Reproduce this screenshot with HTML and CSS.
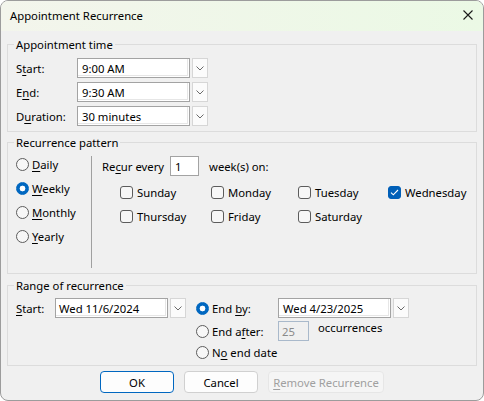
FILE: index.html
```html
<!DOCTYPE html>
<html lang="en">
<head>
<meta charset="utf-8">
<title>Appointment Recurrence</title>
<link rel="stylesheet" href="styles.css">
</head>
<body>
<div class="window">
  <div class="titlebar">
    <span class="title">Appointment Recurrence</span>
    <svg class="close" width="10" height="10" viewBox="0 0 10 10"><path d="M0.5 0.5L9.5 9.5M9.5 0.5L0.5 9.5" stroke="#1a1a1a" stroke-width="1.1" fill="none"/></svg>
  </div>
  <div class="content">
    <fieldset class="group g-time">
      <legend>Appointment time</legend>
      <div class="row"><span class="lbl">S<u>t</u>art:</span>
        <div class="combo"><div class="field">9:00 AM</div><div class="drop"><svg width="8" height="5" viewBox="0 0 8 5"><path d="M0.5 0.5L4 4L7.5 0.5" stroke="#6a6a6a" fill="none"/></svg></div></div></div>
      <div class="row"><span class="lbl">E<u>n</u>d:</span>
        <div class="combo"><div class="field">9:30 AM</div><div class="drop"><svg width="8" height="5" viewBox="0 0 8 5"><path d="M0.5 0.5L4 4L7.5 0.5" stroke="#6a6a6a" fill="none"/></svg></div></div></div>
      <div class="row"><span class="lbl">D<u>u</u>ration:</span>
        <div class="combo"><div class="field">30 minutes</div><div class="drop"><svg width="8" height="5" viewBox="0 0 8 5"><path d="M0.5 0.5L4 4L7.5 0.5" stroke="#6a6a6a" fill="none"/></svg></div></div></div>
    </fieldset>

    <fieldset class="group g-pattern">
      <legend>Recurrence pattern</legend>
      <div class="pattern">
        <div class="freq">
          <div class="opt"><span class="rb"></span><span><u>D</u>aily</span></div>
          <div class="opt"><span class="rb on"></span><span><u>W</u>eekly</span></div>
          <div class="opt"><span class="rb"></span><span><u>M</u>onthly</span></div>
          <div class="opt"><span class="rb"></span><span><u>Y</u>early</span></div>
        </div>
        <div class="sep"></div>
        <div class="weekly">
          <div class="recur"><span class="recur-lbl">Re<u>c</u>ur every</span><span class="num">1</span><span>week(s) on:</span></div>
          <div class="days">
            <div class="opt"><span class="cb"></span><span>Sunday</span></div>
            <div class="opt"><span class="cb"></span><span>Monday</span></div>
            <div class="opt"><span class="cb"></span><span>Tuesday</span></div>
            <div class="opt"><span class="cb on"><svg width="9" height="7" viewBox="0 0 9 7"><path d="M1 3.6L3.3 5.8L8 1" stroke="#fff" stroke-width="1.1" fill="none"/></svg></span><span>Wednesday</span></div>
            <div class="opt"><span class="cb"></span><span>Thursday</span></div>
            <div class="opt"><span class="cb"></span><span>Friday</span></div>
            <div class="opt"><span class="cb"></span><span>Saturday</span></div>
          </div>
        </div>
      </div>
    </fieldset>

    <fieldset class="group g-range">
      <legend>Range of recurrence</legend>
      <div class="range">
        <div class="range-start">
          <span class="lbl-s"><u>S</u>tart:</span>
          <div class="combo"><div class="field f-date">Wed 11/6/2024</div><div class="drop"><svg width="8" height="5" viewBox="0 0 8 5"><path d="M0.5 0.5L4 4L7.5 0.5" stroke="#6a6a6a" fill="none"/></svg></div></div>
        </div>
        <div class="range-end">
          <div class="opt rrow"><span class="rb on"></span><span class="rlbl">End <u>b</u>y:</span>
            <div class="combo"><div class="field">Wed 4/23/2025</div><div class="drop"><svg width="8" height="5" viewBox="0 0 8 5"><path d="M0.5 0.5L4 4L7.5 0.5" stroke="#6a6a6a" fill="none"/></svg></div></div></div>
          <div class="opt rrow r2"><span class="rb"></span><span class="rlbl">End a<u>f</u>ter:</span><span class="num dis">25</span><span class="occ">occurrences</span></div>
          <div class="opt rrow r3"><span class="rb"></span><span>N<u>o</u> end date</span></div>
        </div>
      </div>
    </fieldset>

    <div class="buttons">
      <button class="btn default">OK</button>
      <button class="btn">Cancel</button>
      <button class="btn wide" disabled><u>R</u>emove Recurrence</button>
    </div>
  </div>
</div>
</body>
</html>
```
FILE: styles.css
```css
html, body {
  margin: 0;
  background: #ffffff;
}
body {
  font-family: "Noto Sans", "Liberation Sans", sans-serif;
  font-size: 11.3px;
  color: #000;
}
u { text-decoration-thickness: 1px; text-underline-offset: 2px; }

.window {
  width: 484px;
  height: 401px;
  box-sizing: border-box;
  border: 1px solid #9c9c9c;
  border-radius: 8px;
  background: #f0f0f0;
  overflow: hidden;
  display: flex;
  flex-direction: column;
}

.titlebar {
  height: 30px;
  flex: none;
  display: flex;
  align-items: center;
  justify-content: space-between;
  padding-left: 9px;
  background: linear-gradient(90deg, #f3f5ec, #ebf9e5);
}
.title { line-height: 30px; }
.close { margin-right: 10px; margin-top: -2px; }

.content {
  padding: 6px 6px 0;
  display: flex;
  flex-direction: column;
}

.group {
  margin: 0;
  min-width: 0;
  border: 1px solid #dcdcdc;
  padding: 0 8px;
}
.group legend {
  padding: 0 2px;
  margin-left: -2px;
  line-height: 15px;
}

.g-time { padding-top: 6px; padding-bottom: 5px; }
.g-pattern { margin-top: 3px; padding-top: 4px; padding-bottom: 5px; }
.g-range { margin-top: 4px; padding-top: 5px; padding-bottom: 3px; }

.row {
  display: flex;
  align-items: center;
  height: 20px;
}
.row + .row { margin-top: 4px; }
.lbl { width: 61px; }

.combo { display: flex; gap: 2px; }
.field {
  width: 113px;
  height: 20px;
  box-sizing: border-box;
  border: 1px solid #a3a3a3;
  background: #fff;
  padding-left: 4px;
  display: flex;
  align-items: center;
  box-shadow: inset -1px -1px 0 #fff, inset -2px -2px 0 #e6e6e6;
}
.f-date { padding-left: 3px; }
.drop {
  width: 16px;
  height: 20px;
  box-sizing: border-box;
  border: 1px solid #d6d6d6;
  background: #fbfbfb;
  display: flex;
  align-items: center;
  justify-content: center;
}

/* options */
.opt {
  display: flex;
  align-items: center;
  height: 20px;
}
.rb {
  width: 13px;
  height: 13px;
  flex: none;
  box-sizing: border-box;
  border: 1px solid #5c5c5c;
  border-radius: 50%;
  background: #f7f7f7;
  margin-right: 3px;
}
.rb.on {
  border-color: #0067c0;
  background: radial-gradient(circle, #fff 0 2.6px, #0067c0 3.2px);
}
.cb {
  width: 13px;
  height: 13px;
  flex: none;
  box-sizing: border-box;
  border: 1px solid #5c5c5c;
  border-radius: 3px;
  background: #f7f7f7;
  margin-right: 4px;
  display: flex;
  align-items: center;
  justify-content: center;
}
.cb.on { background: #005fb8; border-color: #005fb8; }

.pattern { display: flex; height: 114px; }
.freq {
  width: 75px;
  display: flex;
  flex-direction: column;
  gap: 4px;
}
.sep { width: 1px; background: #a0a0a0; margin-top: 2px; }
.weekly { padding-left: 10px; }
.recur {
  display: flex;
  align-items: center;
  height: 20px;
  margin-top: 2px;
}
.recur-lbl { width: 68px; }
.num {
  width: 29px;
  height: 20px;
  box-sizing: border-box;
  border: 1px solid #a3a3a3;
  background: #fff;
  padding-left: 4px;
  display: flex;
  align-items: center;
  margin-right: 10px;
}
.days {
  display: grid;
  grid-template-columns: 91px 87px 90px auto;
  row-gap: 4px;
  margin: 6px 0 0 18px;
}

.range { display: flex; }
.range-start { display: flex; align-items: center; height: 20px; margin-right: 10px; }
.lbl-s { width: 39px; }
.rlbl { width: 66px; }
.r2 { margin-top: 3px; }
.r3 { margin-top: 1px; }
.num.dis {
  width: 31px;
  border-color: #a9b9cb;
  background: #f0f0f0;
  color: #8a8a8a;
  padding-left: 3px;
  margin-right: 9px;
}
.occ { align-self: flex-start; line-height: 14px; }

.buttons {
  display: flex;
  justify-content: center;
  gap: 10px;
  margin-top: 5px;
}
.btn {
  width: 74px;
  height: 22px;
  box-sizing: border-box;
  border: 1px solid #d0d0d0;
  border-radius: 4px;
  background: #fdfdfd;
  font: inherit;
  color: #000;
  padding: 0;
}
.btn.default { border-color: #0067c0; }
.btn.wide {
  width: 116px;
  background: #f5f5f5;
  border-color: #e6e6e6;
  color: #a0a0a0;
}
```
